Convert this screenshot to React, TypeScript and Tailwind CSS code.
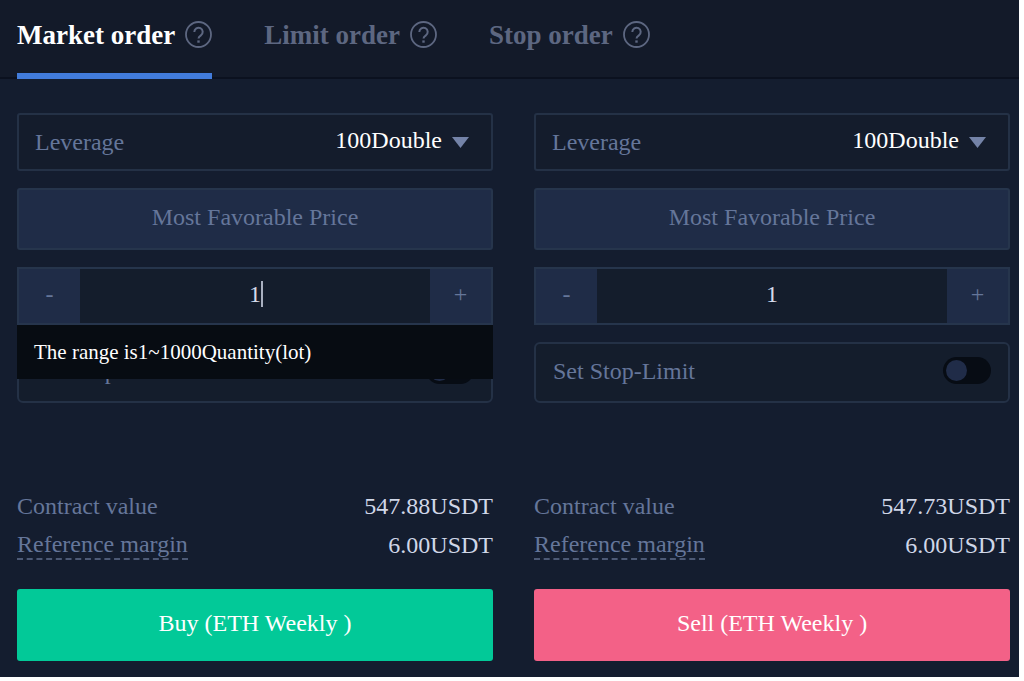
import { useState } from 'react'
import clsx from 'clsx'

type Side = {
  id: string
  action: string
  contractValue: string
  margin: string
  color: string
  showHint: boolean
}

const tabs = ['Market order', 'Limit order', 'Stop order']

const sides: Side[] = [
  { id: 'buy', action: 'Buy (ETH Weekly )', contractValue: '547.88USDT', margin: '6.00USDT', color: 'bg-[#02c998]', showHint: true },
  { id: 'sell', action: 'Sell (ETH Weekly )', contractValue: '547.73USDT', margin: '6.00USDT', color: 'bg-[#f36187]', showHint: false },
]

const HelpIcon = () => (
  <svg className="size-[27px] text-[#5d6781]" viewBox="0 0 27 27" fill="none" stroke="currentColor" aria-hidden="true">
    <circle cx="13.5" cy="13.5" r="12.5" strokeWidth="1.8" />
    <path d="M9.3 11a4.2 4.2 0 1 1 6.6 3.4c-1.6 1.1-2.4 1.7-2.4 3.2" strokeWidth="2" />
    <path d="M13.5 19.4v2.3" strokeWidth="2.4" />
  </svg>
)

const OrderForm = ({ side }: { side: Side }) => {
  const [quantity, setQuantity] = useState(1)
  const step = (n: number) => setQuantity((q) => Math.min(1000, Math.max(1, q + n)))

  return (
    <form className="flex flex-col" onSubmit={(e) => e.preventDefault()}>
      <div className="flex flex-col gap-[17px]">
        <div className="flex h-[58px] items-center justify-between rounded-[3px] border-2 border-[#243146] bg-[#141c2c] pl-4 pr-[22px]">
          <label htmlFor={`${side.id}-leverage`} className="text-[#65769a]">
            Leverage
          </label>
          <div className="flex items-center gap-[10px] pb-1">
            <select id={`${side.id}-leverage`} className="appearance-none bg-transparent text-right text-white outline-none">
              <option>100Double</option>
            </select>
            <svg className="mt-1 h-[11px] w-[17px]" viewBox="0 0 17 11" aria-hidden="true">
              <path d="M0 0h17L8.5 11z" fill="#7483a8" />
            </svg>
          </div>
        </div>

        <button type="button" className="h-[62px] rounded-[3px] border-2 border-[#26354c] bg-[#1f2c47] pb-1 text-[#65769a]">
          Most Favorable Price
        </button>

        <div className="relative flex h-[58px] border-2 border-[#26354c] bg-[#141d2c]">
          <button type="button" onClick={() => step(-1)} aria-label="Decrease quantity" className="w-[61px] bg-[#1f2c47] pb-1 text-[#65769a]">
            -
          </button>
          <input
            aria-label="Quantity"
            value={quantity}
            onChange={(e) => setQuantity(Number(e.target.value) || 1)}
            className="min-w-0 flex-1 bg-transparent pb-1 text-center text-[#d5dbea] outline-none caret-transparent"
          />
          <button type="button" onClick={() => step(1)} aria-label="Increase quantity" className="w-[61px] bg-[#1f2c47] pb-1 text-[#65769a]">
            +
          </button>
          {side.showHint && (
            <>
              <span className="pointer-events-none absolute inset-0 flex items-center justify-center pb-1 pl-[14px]">
                <span className="h-[26px] w-[2px] bg-[#a9b0c0]" />
              </span>
              <p className="absolute -inset-x-[2px] top-full z-10 mt-[2px] flex h-[54px] items-center bg-[#070c12] px-[17px] text-[21px] text-white">
                The range is1~1000Quantity(lot)
              </p>
            </>
          )}
        </div>

        <div className="flex h-[61px] items-center justify-between rounded-md border-2 border-[#243146] bg-[#141d2c] px-[17px] pb-1">
          <label htmlFor={`${side.id}-stop`} className="text-[#65769a]">
            Set Stop-Limit
          </label>
          <input
            id={`${side.id}-stop`}
            type="checkbox"
            role="switch"
            className="flex h-[27px] w-12 appearance-none items-center rounded-full bg-[#070c14] px-[3px] before:size-[21px] before:rounded-full before:bg-[#202c48] checked:justify-end"
          />
        </div>
      </div>

      <dl className="mt-[83px] text-[#d0d7e8]">
        <div className="flex h-[39px] items-center justify-between">
          <dt className="text-[#65769a]">Contract value</dt>
          <dd>{side.contractValue}</dd>
        </div>
        <div className="flex h-[39px] items-center justify-between">
          <dt className="border-b-2 border-dashed border-[#4c5975] text-[#65769a]">Reference margin</dt>
          <dd>{side.margin}</dd>
        </div>
      </dl>

      <button type="submit" className={clsx('mt-[25px] h-[72px] rounded-[3px] pb-1 text-white', side.color)}>
        {side.action}
      </button>
    </form>
  )
}

export default function App() {
  const [active, setActive] = useState(tabs[0])

  return (
    <div className="bg-white pr-[5px]">
      <main className="bg-[#141d2f] pb-4 font-['Liberation_Serif',serif] text-[24px] leading-[28px]">
        <nav className="flex h-[79px] gap-[52px] border-b-2 border-[#0b111f] bg-[#131a29] px-[17px]">
          {tabs.map((tab) => (
            <button
              key={tab}
              type="button"
              onClick={() => setActive(tab)}
              className={clsx(
                '-mb-[2px] flex items-center gap-[10px] border-b-[6px] pb-1 text-[27px] font-bold',
                active === tab ? 'border-[#427cdb] text-white' : 'border-transparent text-[#5d6781]',
              )}
            >
              {tab}
              <HelpIcon />
            </button>
          ))}
        </nav>
        <div className="grid grid-cols-2 gap-[41px] pl-[17px] pr-[9px] pt-[34px]">
          {sides.map((side) => (
            <OrderForm key={side.id} side={side} />
          ))}
        </div>
      </main>
    </div>
  )
}
